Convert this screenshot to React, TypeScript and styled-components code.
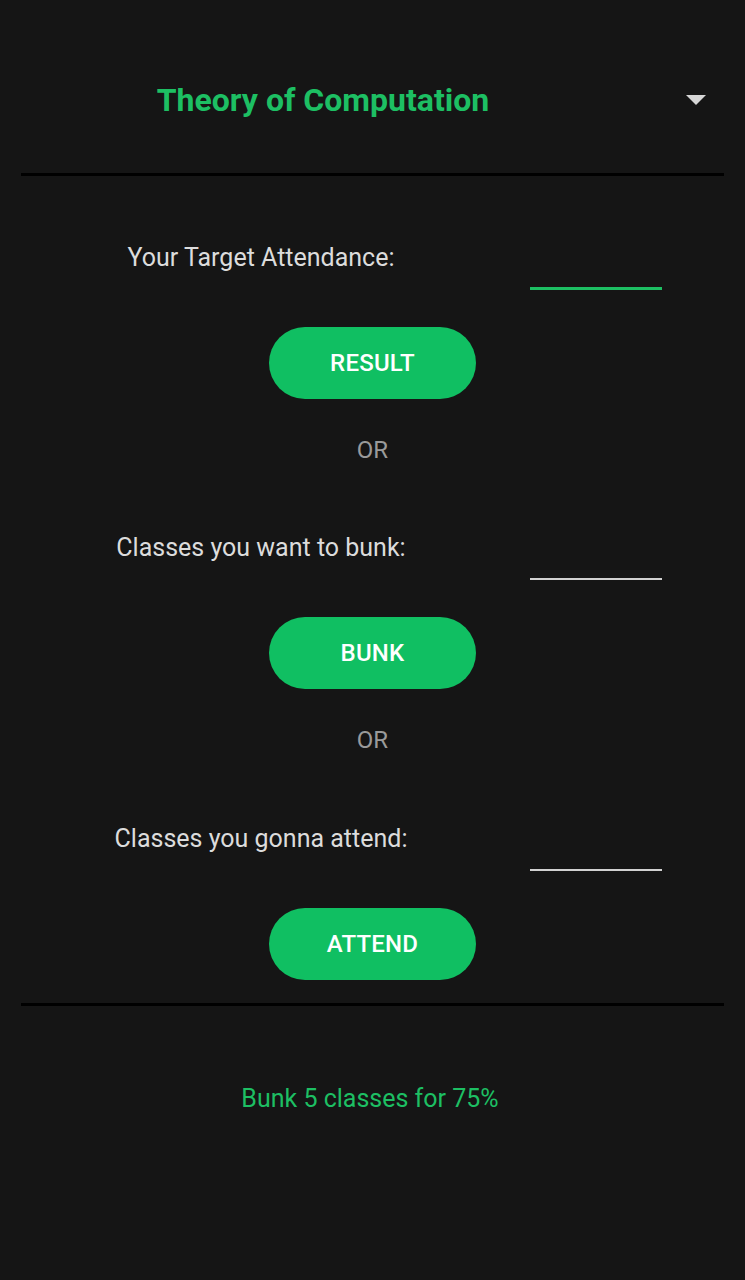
import React from "react";
import styled, { createGlobalStyle } from "styled-components";

const Global = createGlobalStyle`
  html, body { margin: 0; padding: 0; background: #151515; }
  body { font-family: Roboto, "Noto Sans", sans-serif; }
`;

const Page = styled.div`
  width: 745px;
  min-height: 1280px;
  background: #151515;
  display: flex;
  flex-direction: column;
`;

const Header = styled.div`
  height: 173px;
  display: flex;
  align-items: flex-start;
  padding-top: 80px;
  box-sizing: border-box;
`;

const Title = styled.div`
  width: 646px;
  text-align: center;
  font-size: 32px;
  line-height: 40px;
  font-weight: 700;
  color: #1dbf63;
`;

const Arrow = styled.div`
  margin-left: 40px;
  margin-top: 15px;
  width: 0;
  height: 0;
  border-left: 10px solid transparent;
  border-right: 10px solid transparent;
  border-top: 10px solid #d6d6d6;
`;

const Divider = styled.div`
  margin: 0 21px;
  height: 3px;
  background: #000;
`;

const Content = styled.div`
  display: flex;
  flex-direction: column;
  align-items: center;
  padding-top: 67px;
`;

const Block = styled.div<{ $gap: number }>`
  display: flex;
  flex-direction: column;
  align-items: center;
  margin-bottom: ${(p) => p.$gap}px;
`;

const Row = styled.div`
  width: 745px;
  display: grid;
  grid-template-columns: 522px 132px;
  column-gap: 8px;
  align-items: start;
`;

const Label = styled.div`
  text-align: center;
  font-size: 25px;
  line-height: 30px;
  color: #dcdcdc;
`;

const Input = styled.div<{ $active?: boolean }>`
  height: ${(p) => (p.$active ? 44 : 45)}px;
  border-bottom: ${(p) => (p.$active ? "3px solid #1dbf63" : "2px solid #d2d2d2")};
`;

const Button = styled.button`
  margin-top: 37px;
  width: 207px;
  height: 72px;
  border: none;
  border-radius: 36px;
  background: #10bf62;
  color: #fff;
  font-family: Roboto, "Noto Sans", sans-serif;
  font-size: 24px;
  font-weight: 500;
  letter-spacing: 0.2px;
  padding: 0;
`;

const Or = styled.div`
  margin-top: 36px;
  font-size: 24px;
  line-height: 30px;
  color: #9a9a9a;
`;

const Result = styled.div`
  margin-top: 78px;
  text-align: center;
  font-size: 25px;
  line-height: 30px;
  color: #1dbf63;
  padding-right: 5px;
`;

const blocks = [
  { label: "Your Target Attendance:", btn: "RESULT", active: true, gap: 68 },
  { label: "Classes you want to bunk:", btn: "BUNK", active: false, gap: 69 },
  { label: "Classes you gonna attend:", btn: "ATTEND", active: false, gap: 23 },
];

export default function App() {
  return (
    <Page>
      <Global />
      <Header>
        <Title>Theory of Computation</Title>
        <Arrow />
      </Header>
      <Divider />
      <Content>
        {blocks.map((b, i) => (
          <Block key={b.btn} $gap={b.gap}>
            <Row>
              <Label>{b.label}</Label>
              <Input $active={b.active} />
            </Row>
            <Button>{b.btn}</Button>
            {i < blocks.length - 1 && <Or>OR</Or>}
          </Block>
        ))}
      </Content>
      <Divider />
      <Result>Bunk 5 classes for 75%</Result>
    </Page>
  );
}
